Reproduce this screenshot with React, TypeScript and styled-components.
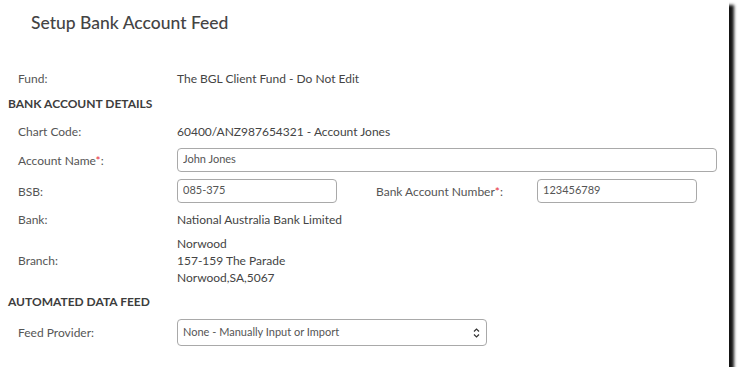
import React from 'react'
import styled, { createGlobalStyle } from 'styled-components'

const GlobalStyle = createGlobalStyle`
  html, body {
    margin: 0;
    padding: 0;
    background: #ffffff;
  }
  body {
    font-family: 'Lato', 'Liberation Sans', sans-serif;
    color: #555555;
  }
`

const Panel = styled.div`
  width: 729px;
  height: 367px;
  box-sizing: border-box;
  background: #ffffff;
  padding: 0 12px 0 8px;
  box-shadow: 5px 5px 3px #151515;
`

const Title = styled.h1`
  margin: 0;
  padding-left: 23px;
  height: 46px;
  line-height: 46px;
  font-size: 17.5px;
  font-weight: 500;
  color: #444444;
`

const Row = styled.div<{ $height: number }>`
  display: flex;
  align-items: center;
  height: ${p => p.$height}px;
  padding-left: 10px;
  font-size: 12px;
`

const Label = styled.div<{ $width?: number }>`
  flex: 0 0 ${p => p.$width ?? 159}px;
  color: #555555;
`

const Value = styled.div`
  color: #444444;
  line-height: 17px;
`

const Required = styled.span`
  color: #e8303a;
`

const Section = styled.h2<{ $height: number }>`
  margin: 0;
  height: ${p => p.$height}px;
  line-height: ${p => p.$height}px;
  font-size: 12px;
  font-weight: 700;
  color: #3d3d3d;
`

const TextInput = styled.input<{ $width: number }>`
  width: ${p => p.$width}px;
  height: 24px;
  box-sizing: border-box;
  border: 1px solid #a9a9a9;
  border-radius: 4px;
  padding: 0 5px 3px;
  font-family: inherit;
  font-size: 11px;
  color: #555555;
  background: #ffffff;
  outline: none;
`

const Gap = styled.div<{ $width: number }>`
  flex: 0 0 ${p => p.$width}px;
`

const SelectBox = styled.div`
  position: relative;
  width: 310px;
  height: 27px;
  box-sizing: border-box;
  border: 1px solid #a9a9a9;
  border-radius: 4px;
  padding: 0 5px 2px;
  display: flex;
  align-items: center;
  font-size: 11px;
  color: #555555;
`

const Arrows = styled.svg`
  position: absolute;
  right: 6px;
  top: 8px;
`

const Field = ({ label, required }: { label: string; required?: boolean }) => (
  <>
    {label}
    {required && <Required>*</Required>}:
  </>
)

export default function App() {
  return (
    <>
      <GlobalStyle />
      <Panel>
        <Title>Setup Bank Account Feed</Title>
        <Row $height={19} />
        <Row $height={26}>
          <Label>Fund:</Label>
          <Value>The BGL Client Fund - Do Not Edit</Value>
        </Row>
        <Section $height={26}>BANK ACCOUNT DETAILS</Section>
        <Row $height={28}>
          <Label>Chart Code:</Label>
          <Value>60400/ANZ987654321 - Account Jones</Value>
        </Row>
        <Row $height={30}>
          <Label><Field label="Account Name" required /></Label>
          <TextInput $width={540} defaultValue="John Jones" />
        </Row>
        <Row $height={32}>
          <Label>BSB:</Label>
          <TextInput $width={160} defaultValue="085-375" />
          <Gap $width={39} />
          <Label $width={161}><Field label="Bank Account Number" required /></Label>
          <TextInput $width={160} defaultValue="123456789" />
        </Row>
        <Row $height={24}>
          <Label>Bank:</Label>
          <Value>National Australia Bank Limited</Value>
        </Row>
        <Row $height={58}>
          <Label>Branch:</Label>
          <Value>
            Norwood<br />
            157-159 The Parade<br />
            Norwood,SA,5067
          </Value>
        </Row>
        <Section $height={26}>AUTOMATED DATA FEED</Section>
        <Row $height={34}>
          <Label>Feed Provider:</Label>
          <SelectBox>
            None - Manually Input or Import
            <Arrows width="7" height="10" viewBox="0 0 7 10" fill="none" stroke="#333" strokeWidth="1.2">
              <path d="M1 3.5 L3.5 1 L6 3.5" />
              <path d="M1 6.5 L3.5 9 L6 6.5" />
            </Arrows>
          </SelectBox>
        </Row>
      </Panel>
    </>
  )
}
